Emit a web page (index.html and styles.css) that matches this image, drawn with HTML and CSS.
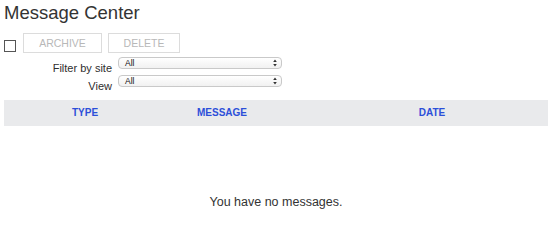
FILE: index.html
```html
<!DOCTYPE html>
<html>
<head>
<meta charset="utf-8">
<link rel="stylesheet" href="styles.css">
</head>
<body>
<div class="page">
  <h1 class="title">Message Center</h1>
  <div class="toolbar">
    <span class="check"></span>
    <button class="btn btn-archive" disabled>ARCHIVE</button>
    <button class="btn btn-delete" disabled>DELETE</button>
  </div>
  <div class="filters">
    <label class="flabel">Filter by site</label>
    <div class="sel">
      <span class="sel-text">All</span>
      <svg class="sel-arrow" width="4" height="8" viewBox="0 0 4 8"><path d="M2 0.5 L3.8 3 L0.2 3 Z M2 7.5 L3.8 5 L0.2 5 Z" fill="#333"/></svg>
    </div>
    <label class="flabel">View</label>
    <div class="sel">
      <span class="sel-text">All</span>
      <svg class="sel-arrow" width="4" height="8" viewBox="0 0 4 8"><path d="M2 0.5 L3.8 3 L0.2 3 Z M2 7.5 L3.8 5 L0.2 5 Z" fill="#333"/></svg>
    </div>
  </div>
  <div class="thead">
    <div class="th">TYPE</div>
    <div class="th">MESSAGE</div>
    <div class="th"></div>
    <div class="th">DATE</div>
  </div>
  <div class="empty">You have no messages.</div>
</div>
</body>
</html>
```
FILE: styles.css
```css
* { box-sizing: border-box; }
html, body { margin: 0; padding: 0; background: #fff; }
body { font-family: "Liberation Sans", Arial, Helvetica, sans-serif; color: #333; }
.page { width: 550px; height: 216px; padding: 1px 2px 0 4px; overflow: hidden; }
.title { margin: 0; font-size: 18.5px; line-height: 24px; font-weight: normal; color: #333; }
.toolbar { display: flex; align-items: flex-end; margin-top: 8px; height: 20px; }
.check { width: 12px; height: 12px; border: 1px solid #555; background: #fff; margin-bottom: 1px; margin-right: 7px; }
.btn { height: 20px; padding: 0; border: 1px solid #dcdcdc; background: #fff; color: #b8b8b8; font-family: "Liberation Sans", Arial, sans-serif; font-size: 10.5px; line-height: 18px; text-align: center; }
.btn-archive { width: 79px; }
.btn-delete { width: 72px; margin-left: 6px; }
.filters { display: grid; grid-template-columns: 108px 164px; grid-auto-rows: 18px; column-gap: 6px; margin-top: 4px; }
.flabel { text-align: right; font-size: 11px; line-height: 18px; padding-top: 2px; color: #2e2e2e; }
.sel { position: relative; height: 12px; border: 1px solid #c9c9c9; border-radius: 4px; background: linear-gradient(#ffffff, #f1f1f1); display: flex; align-items: center; padding-left: 6px; }
.sel-text { font-size: 8.5px; line-height: 10px; color: #111; }
.sel-arrow { position: absolute; right: 4px; top: 1px; }
.thead { display: grid; grid-template-columns: 162px 112px 38px 232px; height: 26px; margin-top: 7px; background: #e9eaec; }
.th { text-align: center; font-size: 10px; font-weight: bold; line-height: 26px; color: #2c4fd9; }
.empty { text-align: center; font-size: 12.5px; line-height: 16px; padding-top: 68px; color: #333; }
```
